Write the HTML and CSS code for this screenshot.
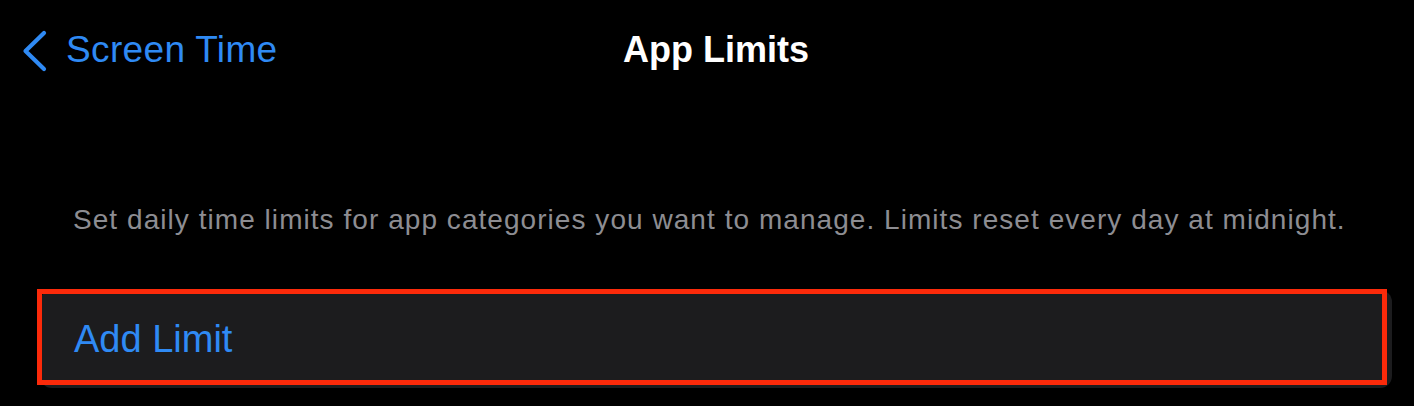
FILE: index.html
```html
<!DOCTYPE html>
<html lang="en">
<head>
<meta charset="utf-8">
<title>App Limits</title>
<link rel="stylesheet" href="styles.css">
</head>
<body>
<div class="screen">
  <header class="nav">
    <a class="back" href="#">
      <svg class="chev" width="26" height="42" viewBox="0 0 26 42" aria-hidden="true">
        <path d="M22 3 L3.5 21 L22 39" fill="none" stroke="#2f8af4" stroke-width="4.2" stroke-linecap="round" stroke-linejoin="round"/>
      </svg>
      <span class="back-label">Screen Time</span>
    </a>
    <h1 class="title">App Limits</h1>
    <div class="spacer"></div>
  </header>
  <p class="desc">Set daily time limits for app categories you want to manage. Limits reset every day at midnight.</p>
  <div class="cell">
    <span class="cell-label">Add Limit</span>
  </div>
</div>
</body>
</html>
```
FILE: styles.css
```css
html, body {
  margin: 0;
  padding: 0;
  background: #000;
}
body {
  font-family: "Liberation Sans", Arial, sans-serif;
  width: 1414px;
  height: 406px;
  overflow: hidden;
}
.screen {
  display: flex;
  flex-direction: column;
}
.nav {
  display: grid;
  grid-template-columns: 1fr auto 1fr;
  align-items: center;
  padding-top: 28px;
  height: 44px;
}
.back {
  display: flex;
  align-items: center;
  gap: 18px;
  padding-left: 22px;
  text-decoration: none;
  color: #2f8af4;
}
.chev {
  display: block;
  margin-top: 1px;
}
.back-label {
  font-size: 37px;
  line-height: 44px;
  letter-spacing: 0.35px;
}
.title {
  margin: 0;
  padding-left: 18px;
  font-size: 36px;
  line-height: 44px;
  font-weight: 700;
  color: #fff;
}
.desc {
  margin: 132px 0 0 0;
  padding-left: 73px;
  font-size: 28px;
  line-height: 32px;
  letter-spacing: 1.05px;
  color: #8d8d92;
}
.cell {
  position: relative;
  margin: 54px 22px 0 40px;
  height: 98px;
  display: flex;
  align-items: center;
  padding-left: 34px;
  background: #1c1c1e;
  border-radius: 12px;
}
.cell::after {
  content: "";
  position: absolute;
  left: -3px;
  top: -1px;
  right: 5px;
  bottom: 3px;
  border: 5px solid #fb2a0a;
  pointer-events: none;
}
.cell-label {
  font-size: 38px;
  line-height: 98px;
  color: #2f8af4;
}
```
